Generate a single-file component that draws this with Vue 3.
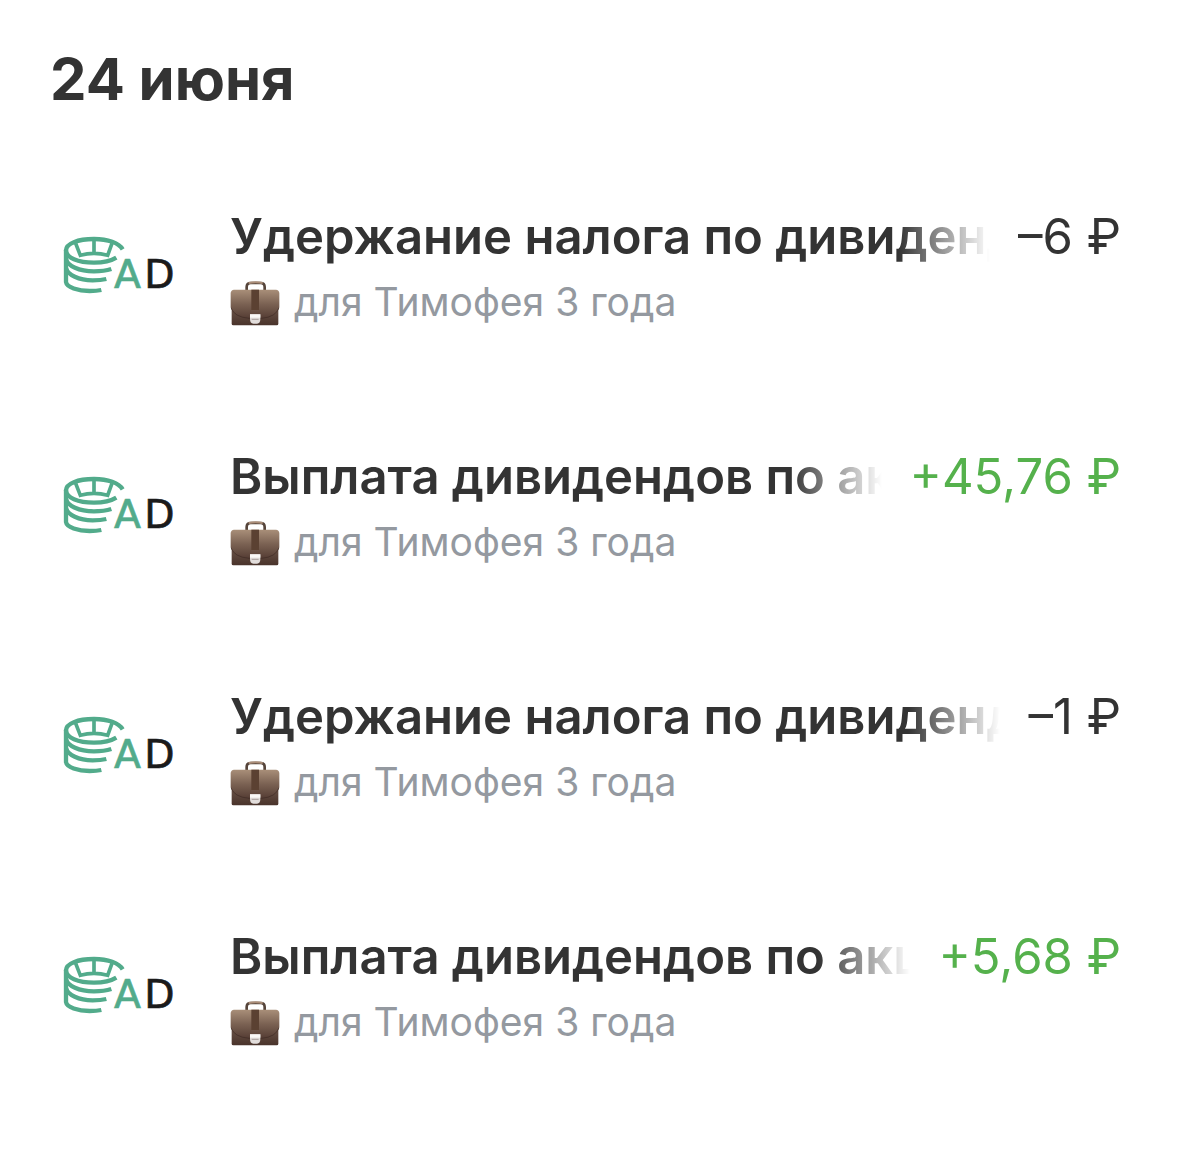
<script setup>
const rows = [
  { title: 'Удержание налога по дивидендам', amount: '–6 ₽', income: false },
  { title: 'Выплата дивидендов по акциям', amount: '+45,76 ₽', income: true },
  { title: 'Удержание налога по дивидендам', amount: '–1 ₽', income: false },
  { title: 'Выплата дивидендов по акциям', amount: '+5,68 ₽', income: true },
]
</script>

<template>
  <main class="history">
    <h1 class="date">24 июня</h1>
    <ul class="list">
      <li v-for="(row, i) in rows" :key="i" class="row">
        <svg class="logo" viewBox="0 0 420 240" role="img" aria-label="AD">
          <g fill="none" stroke="#52ab8b" stroke-width="13">
            <path d="M218 73C207 54 174 42 132 42C83 42 48 56 48 76C48 98 84 113 132 113C158 113 181 109 199 98" />
            <path d="M48 74V171C50 187 84 198 119 198C134 198 145 197 154 195" />
            <path d="M48 102C53 123 87 139 132 139C151 139 169 137 184 132" />
            <path d="M48 129C53 150 87 166 128 166C144 166 157 165 169 162" />
            <path d="M77 55L91 91C116 84 148 84 173 91L186 55M132 44V84" stroke-width="11" />
          </g>
          <text x="192" y="188" class="logo-a">A</text>
          <text x="283" y="188" class="logo-d">D</text>
        </svg>
        <div class="body">
          <div class="line">
            <span class="title">{{ row.title }}</span>
            <span class="amount" :class="{ income: row.income }">{{ row.amount }}</span>
          </div>
          <div class="account">
            <svg class="case" viewBox="0 -6 150 138" aria-hidden="true">
              <defs>
                <linearGradient :id="'flap' + i" x1="0" y1="0" x2="0" y2="1">
                  <stop offset="0" stop-color="#a98f79" />
                  <stop offset="0.5" stop-color="#7b6253" />
                  <stop offset="1" stop-color="#553d34" />
                </linearGradient>
                <linearGradient :id="'base' + i" x1="0" y1="0" x2="0" y2="1">
                  <stop offset="0" stop-color="#80695a" />
                  <stop offset="1" stop-color="#49332b" />
                </linearGradient>
              </defs>
              <path d="M50 30V18Q50 6 62 6H92Q104 6 104 18V30" fill="none" stroke="#55443a" stroke-width="8" />
              <path d="M56 6Q77 1 98 6" fill="none" stroke="#aa8d78" stroke-width="6" />
              <rect x="5" y="46" width="140" height="87" rx="5" :fill="`url(#base${i})`" />
              <path d="M12 26H138Q147 27 148 36V77Q142 108 95 112H57Q8 108 2 77V36Q3 27 12 26Z" :fill="`url(#flap${i})`" />
              <path d="M3 80Q12 108 57 112H95Q138 108 147 80" fill="none" stroke="#3e2a24" stroke-width="2" />
              <path d="M64 26H87V87H64Z" fill="#5b4132" />
              <path d="M60 100H91V114Q91 128 81 128H70Q60 128 60 114Z" fill="#e2dddb" />
              <path d="M60 100H91V110H60Z" fill="#faf8f7" />
              <path d="M65 115H86" stroke="#a9a19e" stroke-width="3" />
            </svg>
            <span>для Тимофея 3 года</span>
          </div>
        </div>
      </li>
    </ul>
  </main>
</template>

<style>
body {
  margin: 0;
  background: #fff;
}
</style>

<style scoped>
.history {
  padding: 44px 58px 0 50px;
  font-family: Inter, "Liberation Sans", sans-serif;
  color: #333;
}
.date {
  margin: 0;
  font-size: 58px;
  line-height: 70px;
  font-weight: 700;
}
.list {
  list-style: none;
  margin: 92px 0 0;
  padding: 0;
}
.row {
  display: flex;
  align-items: flex-start;
  height: 240px;
}
.logo {
  flex: none;
  width: 140px;
  height: 80px;
  margin: 19px 40px 0 0;
}
.logo-a,
.logo-d {
  font-family: "DejaVu Sans", sans-serif;
  font-size: 118px;
  fill: #52ab8b;
  stroke: #52ab8b;
  stroke-width: 2px;
}
.logo-d {
  fill: #1b1b1b;
  stroke: #1b1b1b;
}
.body {
  flex: 1;
  min-width: 0;
}
.line {
  display: flex;
  gap: 28px;
  font-size: 49px;
  line-height: 62px;
  white-space: nowrap;
}
.title {
  flex: 1;
  min-width: 0;
  overflow: hidden;
  font-weight: 600;
  mask-image: linear-gradient(to left, transparent, #000 92px);
}
.amount {
  flex: none;
}
.income {
  color: #55b14c;
}
.account {
  display: flex;
  align-items: center;
  gap: 14px;
  margin-top: 11px;
  font-size: 39px;
  line-height: 46px;
  color: #9499a0;
}
.case {
  flex: none;
  width: 50px;
  height: 46px;
  overflow: visible;
}
</style>
